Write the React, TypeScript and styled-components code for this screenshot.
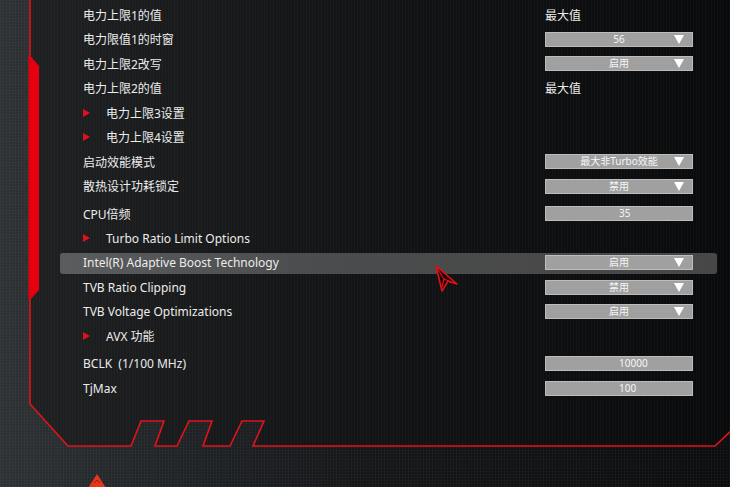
import React from "react";
import styled, { createGlobalStyle } from "styled-components";

const Global = createGlobalStyle`
  html, body { margin: 0; padding: 0; background: #111; }
  body { font-family: "Noto Sans", "Noto Sans CJK SC", sans-serif; }
`;

const Screen = styled.div`
  position: relative;
  width: 730px;
  height: 487px;
  overflow: hidden;
  background:
    repeating-linear-gradient(90deg, rgba(255,255,255,0.03) 0 1px, transparent 1px 3px),
    repeating-linear-gradient(0deg, rgba(255,255,255,0.025) 0 1px, transparent 1px 3px),
    linear-gradient(90deg, #2d3134 0%, #222528 20%, #141618 50%, #0b0c0e 100%);
`;

const Decor = styled.svg`
  position: absolute;
  left: 0;
  top: 0;
  width: 730px;
  height: 487px;
`;

const List = styled.div`
  position: relative;
  display: flex;
  flex-direction: column;
  padding: 2.5px 0 0 60px;
  width: 657px;
`;

const Row = styled.div<{ $gap?: boolean }>`
  height: 24.5px;
  margin-top: ${(p) => (p.$gap ? "3px" : "0")};
  display: flex;
  align-items: center;
`;

const Bar = styled.div<{ $active?: boolean }>`
  flex: 1;
  height: 21px;
  box-sizing: border-box;
  margin-top: 2px;
  padding: 0 24px 2px 23px;
  display: grid;
  grid-template-columns: 1fr 148px;
  align-items: center;
  border-radius: 3px;
  background: ${(p) =>
    p.$active ? "linear-gradient(90deg, #5b5c5d 0%, #4b4c4d 40%, #474747 100%)" : "transparent"};
`;

const Label = styled.div`
  display: flex;
  align-items: center;
  font-size: 12px;
  color: #ececec;
  white-space: pre;
`;

const SubMark = styled.span`
  width: 0;
  height: 0;
  border-top: 4px solid transparent;
  border-bottom: 4px solid transparent;
  border-left: 7px solid #e3101c;
  margin-right: 16px;
`;

const ValueText = styled.div`
  font-size: 12px;
  color: #ececec;
`;

const Box = styled.div<{ $input?: boolean }>`
  position: relative;
  height: 15px;
  box-sizing: border-box;
  background: #a0a0a0;
  border: 1px solid #bcbcbc;
  font-size: 10px;
  line-height: 13px;
  color: #f6f6f6;
  text-align: ${(p) => (p.$input ? "left" : "center")};
  padding-left: ${(p) => (p.$input ? "73px" : "0")};
`;

const DropArrow = styled.span`
  position: absolute;
  right: 8px;
  top: 2px;
  width: 0;
  height: 0;
  border-left: 5px solid transparent;
  border-right: 5px solid transparent;
  border-top: 9px solid #ffffff;
`;

const Cursor = styled.svg`
  position: absolute;
  left: 430px;
  top: 262px;
  width: 32px;
  height: 34px;
`;

type Item = {
  label: string;
  sub?: boolean;
  gap?: boolean;
  active?: boolean;
  text?: string;
  drop?: string;
  input?: string;
};

const items: Item[] = [
  { label: "电力上限1的值", text: "最大值" },
  { label: "电力限值1的时窗", drop: "56" },
  { label: "电力上限2改写", drop: "启用" },
  { label: "电力上限2的值", text: "最大值" },
  { label: "电力上限3设置", sub: true },
  { label: "电力上限4设置", sub: true },
  { label: "启动效能模式", drop: "最大非Turbo效能" },
  { label: "散热设计功耗锁定", drop: "禁用" },
  { label: "CPU倍频", input: "35", gap: true },
  { label: "Turbo Ratio Limit Options", sub: true },
  { label: "Intel(R) Adaptive Boost Technology", drop: "启用", active: true },
  { label: "TVB Ratio Clipping", drop: "禁用" },
  { label: "TVB Voltage Optimizations", drop: "启用" },
  { label: "AVX 功能", sub: true },
  { label: "BCLK  (1/100 MHz)", input: "10000", gap: true },
  { label: "TjMax", input: "100" },
];

const framePts =
  "30,-2 30,404 68,446 131,446 141,421 164,421 155,446 177,446 189,421 212,421 203,446 230,446 242,421 264,421 253,446 715,446 732,430";

export default function App() {
  return (
    <>
      <Global />
      <Screen>
        <Decor viewBox="0 0 730 487">
          <defs>
            <linearGradient id="inner" x1="0" y1="0" x2="1" y2="0">
              <stop offset="0" stopColor="#1e2022" />
              <stop offset="0.45" stopColor="#131416" />
              <stop offset="1" stopColor="#090a0b" />
            </linearGradient>
            <pattern id="grid" width="3" height="3" patternUnits="userSpaceOnUse">
              <rect width="1" height="3" fill="rgba(255,255,255,0.025)" />
            </pattern>
          </defs>
          <polygon points={framePts + " 732,-2"} fill="url(#inner)" />
          <polygon points={framePts + " 732,-2"} fill="url(#grid)" />
          <polyline points={framePts} fill="none" stroke="#e4121b" strokeWidth="1.6" />
          <polygon points="28.5,56 30.5,56 39,66 39,290 31,299 28.5,299" fill="#e6000f" />
          <polygon points="97,474 88,488 106,488" fill="#e8361c" />
          <path d="M94 483 L97 480 L100 483" fill="none" stroke="#a01a10" strokeWidth="1" />
        </Decor>
        <List>
          {items.map((it, i) => (
            <Row key={i} $gap={it.gap}>
              <Bar $active={it.active}>
                <Label>
                  {it.sub && <SubMark />}
                  {it.label}
                </Label>
                {it.text && <ValueText>{it.text}</ValueText>}
                {it.drop && (
                  <Box>
                    {it.drop}
                    <DropArrow />
                  </Box>
                )}
                {it.input && <Box $input>{it.input}</Box>}
              </Bar>
            </Row>
          ))}
        </List>
        <Cursor viewBox="0 0 32 34">
          <polygon
            points="6,4 27,22 18,19 12,29"
            fill="#1a0606"
            stroke="#e0101a"
            strokeWidth="1.6"
            strokeLinejoin="round"
          />
          <polyline points="7,6 14,17 12,25" fill="none" stroke="#e0101a" strokeWidth="1.2" />
          <polyline points="14,17 22,21" fill="none" stroke="#e0101a" strokeWidth="1.2" />
        </Cursor>
      </Screen>
    </>
  );
}
